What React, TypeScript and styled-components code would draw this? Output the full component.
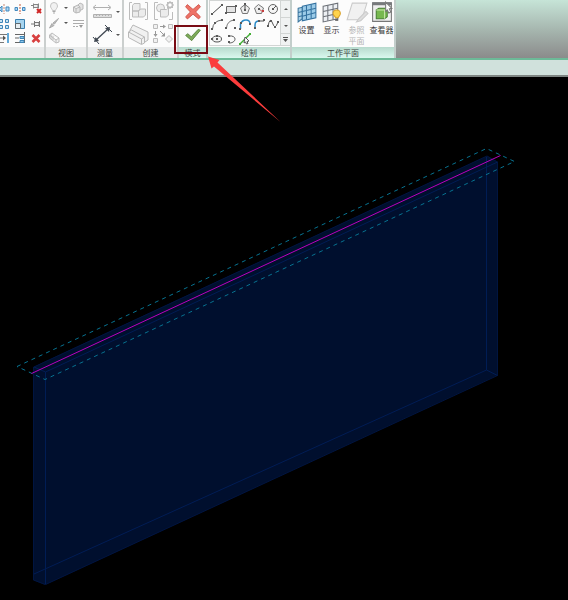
import React from 'react';
import styled, { createGlobalStyle, css } from 'styled-components';

const GlobalStyle = createGlobalStyle`
  *, *::before, *::after { box-sizing: border-box; }
  body {
    margin: 0;
    background: #000;
    font-family: "Noto Sans CJK SC", "Liberation Sans", sans-serif;
    font-size: 8px;
    overflow-x: hidden;
  }
`;

const Page = styled.div`
  position: relative;
  overflow: hidden;
`;

const Ribbon = styled.header`
  display: flex;
  height: 60px;
  background: linear-gradient(#c6e4d7, #a4b3ac 55%, #8b8b8b);
  border-bottom: 2px solid #6dba98;
`;

const OptionsBar = styled.div`
  height: 17px;
  background: #d0e1dc;
  border-bottom: 2px solid #7d8582;
`;

const Panel = styled.section<{ $width: number; $active?: boolean }>`
  position: relative;
  display: flex;
  flex-direction: column;
  flex: none;
  width: ${p => p.$width}px;
  background: #fcfcfc;
  border-right: 2px solid ${p => (p.$active ? '#c3cecb' : '#cbcfce')};
`;

const PanelBody = styled.div`
  display: flex;
  flex: 1;
  min-height: 0;
  overflow: hidden;
`;

const PanelTitle = styled.h2<{ $active?: boolean }>`
  margin: 0;
  height: 11px;
  font-size: 8px;
  font-weight: 400;
  line-height: 11px;
  text-align: center;
  color: #3c4442;
  background: ${p => (p.$active ? 'linear-gradient(#b7dacd, #d9f8ee)' : '#e9ebeb')};
`;

const IconGrid = styled.div<{ $cols: string; $row: number; $end?: boolean }>`
  display: grid;
  flex: 1;
  min-width: 0;
  grid-template-columns: ${p => p.$cols};
  grid-auto-rows: ${p => p.$row}px;
  justify-content: ${p => (p.$end ? 'end' : 'center')};
  align-content: start;
`;

const buttonReset = css`
  padding: 0;
  border: 0;
  background: none;
  font: inherit;
  color: inherit;
`;

const ToolButton = styled.button`
  ${buttonReset}
  display: flex;
  align-items: center;
  justify-content: center;
  min-width: 0;
  svg { flex: none; display: block; }
`;

const Gallery = styled.div`
  display: flex;
  flex: 1;
  margin: 0 0 1px 1px;
  border: 1px solid #d2d5d4;
  border-width: 1px 0 1px 1px;
`;

const ScrollColumn = styled.div`
  display: grid;
  width: 10px;
  grid-template-rows: 16px 15px 1fr;
  background: #d2d5d4;
  gap: 1px;
  padding-left: 1px;
  ${ToolButton} { background: #f0f2f2; }
`;

const LargeTools = styled.div`
  display: grid;
  flex: 1;
  grid-template-columns: repeat(4, 25px);
  justify-content: end;
`;

const LargeButton = styled.button`
  ${buttonReset}
  display: flex;
  flex-direction: column;
  align-items: center;
  justify-content: flex-start;
  color: #3a3a3a;
  line-height: 11px;
  white-space: nowrap;
  svg { flex: none; display: block; }
  &:disabled { color: #b4b4b4; }
`;

const Highlight = styled.div`
  position: absolute;
  left: -5px;
  top: 25px;
  width: 34px;
  height: 29px;
  border: 2px solid #790b14;
  z-index: 1;
`;

const Pointer = styled.svg`
  position: absolute;
  left: 200px;
  top: 50px;
  pointer-events: none;
  z-index: 2;
`;

const Viewport = styled.main`
  background: #000;
  svg { display: block; width: 100%; height: auto; }
`;

type Name =
  | 'alignLeft' | 'mirror' | 'unpin' | 'array' | 'scale' | 'pin' | 'offset' | 'trim' | 'remove'
  | 'bulb' | 'cubes' | 'brush' | 'lines' | 'box'
  | 'ruler' | 'dimension' | 'group' | 'similar' | 'parts' | 'assembly'
  | 'cancel' | 'finish'
  | 'line' | 'rect' | 'polygon' | 'polygonOut' | 'circle' | 'arc' | 'arcCenter' | 'tangent'
  | 'fillet' | 'spline' | 'ellipse' | 'halfEllipse' | 'pick'
  | 'set' | 'show' | 'refPlane' | 'viewer'
  | 'down' | 'up' | 'more';

const dark = '#5a5a5a';
const dot = (x: number, y: number, c = dark) => <rect x={x - 1} y={y - 1} width="2" height="2" fill={c} />;

const art: Record<Name, React.ReactNode> = {
  alignLeft: (
    <g>
      <path d="M2 8l3-3v6zM12 6v4H9V6z" fill="#a9d4f2" stroke="#4289be" />
      <path d="M7 3v10" stroke="#c98a74" strokeDasharray="2 1" />
    </g>
  ),
  mirror: (
    <g>
      <path d="M2 6.500h2.500v3H2zM12 6.500H9.500v3H12z" fill="#a9d4f2" stroke="#4289be" />
      <path d="M7 3v10" stroke="#c35a3b" strokeDasharray="2 1" />
    </g>
  ),
  unpin: (
    <g>
      <path d="M2 4.500h2M4.500 2.500v5M5 3.500h4v3H5M9.500 2.500v5" stroke="#858585" fill="#eee" />
      <path d="M8 8l4 4M12 8l-4 4" stroke="#cf2525" strokeWidth="2" />
    </g>
  ),
  array: (
    <g fill="#c6e3f4" stroke="#3f86b8">
      <path d="M2.500 3.500h3v3h-3zM8.500 3.500h3v3h-3zM2.500 9.500h3v3h-3zM8.500 9.500h3v3h-3z" />
    </g>
  ),
  scale: (
    <g>
      <path d="M2.500 3.500h9v9h-9z" fill="#a6d4ef" stroke="#3a7fae" />
      <path d="M2.500 7.500h5v5h-5z" fill="#e7eef2" stroke="#60686c" />
    </g>
  ),
  pin: <path d="M2 8h3M5.500 5v6M6 6.500h4v3H6M10.500 5v6" stroke="#787878" fill="#eee" />,
  offset: (
    <g>
      <path d="M1 3.500h11M2 7h5M1 11.500h6" stroke="#777" />
      <path d="M6 4.500 9 7 6 9.500z" fill="#555" />
      <path d="M10 2h2v10h-2z" fill="#62a9d8" />
    </g>
  ),
  trim: (
    <g>
      <path d="M2 3.500h9M2 7h4M2 11.500h5M11.500 1v11" stroke="#666" />
      <path d="M7 5.500h4v2H7zM7 9.500h4v2H7z" fill="#8fc7ea" stroke="#3f86b8" />
    </g>
  ),
  remove: <path d="M3.500 4 10.500 11M10.500 4 3.500 11" stroke="#d84040" strokeWidth="2.600" fill="none" />,
  bulb: (
    <g fill="#f1f1f1" stroke="#c4c4c4">
      <path d="M5.500 9.500C5 7.500 3.500 7 3.500 5a3.500 3.500 0 0 1 7 0c0 2-1.500 2.500-2 4.500z" />
      <path d="M5.500 10.500h3M6 12h2" stroke="#aaa" />
    </g>
  ),
  cubes: (
    <g fill="#e3e3e3" stroke="#b8b8b8">
      <path d="M2.500 6 7 4l2 2v5l-4 1-2.500-1.500zM2.500 6 5 7.500 9 6M5 7.500V12M7 4l2-2 3 1.500V8L9 9.500" />
    </g>
  ),
  brush: (
    <g fill="#bbb" stroke="#ababab">
      <path d="M11.500 2.500 7.500 8 6 7z" />
      <path d="M5 7.500 7 9.500 2.500 12z" />
    </g>
  ),
  lines: (
    <g stroke="#acacac" fill="none">
      <path d="M2 4.500h11M2 7.500h11" /><path d="M2 10.500h6" strokeDasharray="2 1" /><path d="M8 9h4l-2 3z" fill="#999" stroke="none" />
    </g>
  ),
  box: (
    <g fill="#f1f1f1" stroke="#bdbdbd">
      <path d="M2.500 4 5 2l7 5v4l-3 1-6.500-5zM2.500 4 9 9l3-2M9 9v3M4 3v5M6 5v4" />
    </g>
  ),
  ruler: (
    <g stroke="#b0b0b0" fill="#ddd">
      <path d="M3 7.500h16M5 5 2 7.500 5 10M17 5l3 2.500-3 2.500" fill="none" />
      <path d="M2.500 14.500h18v3h-18z" />
      <path d="M5.500 14v2M8.500 14v2M11.500 14v2M14.500 14v2M17.500 14v2" />
    </g>
  ),
  dimension: (
    <g stroke="#404852" fill="none">
      <path d="M4 18 18 5" strokeWidth="1.300" />
      <path d="m2 14 6 7M14 2l7 7" />
      <path d="m3 19 1.500-5 3.500 4zM19 4l-5 1 4 4z" fill="#404852" stroke="none" />
    </g>
  ),
  group: (
    <g stroke="#bcbcbc" fill="#ececec">
      <path d="M5 2.500H2.500v17H5M18 2.500h2.500v17H18" fill="none" />
      <path d="M5.500 5.500 7 3.500h6v6l-2 1.500H5.500zM5.500 11h6v6h-6zM11.500 11l2-2h5v6l-2 2h-5z" />
    </g>
  ),
  similar: (
    <g stroke="#bcbcbc" fill="#ececec">
      <path d="M6 2.500H2.500v17H6M17 19.500h3.500V12" fill="none" />
      <circle cx="8.500" cy="8" r="4" />
      <path d="M8.500 9.500h6l2-1.500v7l-2 2h-6z" />
      <circle cx="18" cy="5" r="2.500" fill="#fff" strokeWidth="1.500" />
      <path d="M18 1v1M18 8v1M14 5h1M21 5h1M15 2l1 1M21 8l-1-1M21 2l-1 1M15 8l1-1" />
    </g>
  ),
  parts: (
    <g fill="#f1f1f1" stroke="#b8b8b8">
      <path d="m3 7 3-5 15 7v8l-3 2L3 11z" />
      <path d="m1.500 9 3-2 13 7v6l-3 1.500-13-7zM14.500 21v-5l3-2M1.500 9l13 7" />
    </g>
  ),
  assembly: (
    <g fill="#f1f1f1" stroke="#bcbcbc">
      <path d="M1.500 1.500h4v4h-4zM16.500 1.500h4v4h-4zM1.500 15.500h4v4h-4zM17 12.500l3.500 3.500-3.500 3.500-3.500-3.500z" />
      <path d="M8 3.500h4M3.500 8v3M8 8l4 4" stroke="#999" fill="none" />
      <path d="m11 1.500 3 2-3 2zM1.500 11h4l-2 3zM13 9.500v4H9z" fill="#999" stroke="none" />
    </g>
  ),
  cancel: (
    <path d="m5 3 6.500 5.500L18 3l2 2.500-5.500 6L20 17l-2 2.500-6.500-5.500L5 19.500 3 17l5.500-5.500L3 5.500z" fill="#ee7266" stroke="#cc5047" />
  ),
  finish: (
    <path d="m3 12 2.500-2 4 3.500L17.500 5l2.500 1L10 18z" fill="#7eaa58" stroke="#56833d" />
  ),
  line: <g><path d="M2 12 12 3" stroke="#444" />{dot(2, 12)}{dot(12, 3)}</g>,
  rect: <g><path d="M2.500 4.500h9v6h-9z" fill="#e4e4e4" stroke="#666" />{dot(12, 4)}{dot(2, 11)}</g>,
  polygon: <g><path d="M7 2.500 11.500 6l-2 5.500h-5L2.500 6z" fill="#eee" stroke="#777" /><path d="M7 2v6" stroke="#444" />{dot(7, 8)}{dot(7, 2)}</g>,
  polygonOut: <g><path d="M6.500 2.500 11.500 6l-2 5.500h-5L2.500 6z" fill="#eee" stroke="#777" /><path d="m7 7 4 3" stroke="#c55" />{dot(7, 7)}{dot(11, 9, '#c43d3d')}</g>,
  circle: <g><circle cx="7" cy="7" r="4.500" fill="#f5f5f5" stroke="#666" /><path d="m7 7 3-3" stroke="#555" />{dot(7, 7)}</g>,
  arc: <g><path d="M2.500 12Q3 4 12 3" fill="none" stroke="#666" />{dot(2, 12)}{dot(5, 6)}{dot(12, 3)}</g>,
  arcCenter: <g><path d="M2.500 11Q3 4 10 3" fill="none" stroke="#777" />{dot(2, 11)}{dot(10, 3)}{dot(11, 11)}</g>,
  tangent: <g><path d="M2.500 12V7Q4 3 8 3t4 4" fill="none" stroke="#2789c7" strokeWidth="1.500" />{dot(2, 12)}{dot(3, 6)}{dot(12, 7)}</g>,
  fillet: <g><path d="M3 12V8q0-4 4-4" fill="none" stroke="#2789c7" strokeWidth="1.500" /><path d="M7 4h5" stroke="#555" />{dot(3, 11)}{dot(7, 4)}{dot(12, 3)}</g>,
  spline: <g><path d="M2 9q2-9 4-4t3 5 3-5" fill="none" stroke="#555" />{dot(2, 9)}{dot(5, 4)}{dot(9, 10)}{dot(12, 5)}</g>,
  ellipse: <g><ellipse cx="7" cy="7" rx="4.500" ry="3" fill="#f5f5f5" stroke="#555" />{dot(7, 7)}{dot(2, 7)}{dot(7, 4)}</g>,
  halfEllipse: <g><path d="M5 4c8-1 8 7 0 7" fill="none" stroke="#555" />{dot(5, 4)}{dot(5, 10)}</g>,
  pick: <g><path d="M2 12 12 2" stroke="#42ae34" strokeWidth="1.500" /><path d="m7 5 4 4-2 .5 1 2-1.500.5-1-2L6 11z" fill="#fff" stroke="#555" />{dot(2, 12, '#42ae34')}{dot(12, 2, '#42ae34')}</g>,
  set: (
    <g>
      <path d="m3 8 4-1v11l-4 3z" fill="#abd2e8" stroke="#3a759d" />
      <path d="m7 6 13-3v14L7 20z" fill="#9bcbe8" stroke="#3472a0" />
      <path d="M11 5v14M15.500 4v14M7 11l13-3M7 15.500 20 12M3 12l4-1M3 16l4-1" stroke="#3472a0" fill="none" />
    </g>
  ),
  show: (
    <g>
      <path d="m3 6 14-3v15L3 21z" fill="#edf0f4" stroke="#6c7077" />
      <path d="M7.500 5v15M12.500 4v15M3 11l14-3M3 16l14-3" stroke="#6c7077" fill="none" />
      <path d="M15 17c0-1-2.500-2-2.500-4a3.500 3.500 0 0 1 7 0c0 2-2 3-2 4z" fill="#ffd34c" stroke="#d8a02b" />
      <path d="M14.500 18h3v2h-3z" fill="#666" />
    </g>
  ),
  refPlane: (
    <g fill="#f1f1f1" stroke="#cacaca">
      <path d="M7 3h14l-5 16H2z" />
      <path d="m20 11 2 2-7 7-4 1 2-3z" fill="#ddd" />
    </g>
  ),
  viewer: (
    <g>
      <path d="M2.500 3.500h18v17h-18z" fill="#eee" stroke="#777" />
      <path d="M2 2h19v3H2z" fill="#77797c" />
      <path d="M6 9.500 8.500 8h8v8L14 18H6z" fill="#77b84e" stroke="#477f32" />
      <path d="M6 9.500h8V18M14 9.500 16.500 8" stroke="#c9e7ad" fill="none" />
      <path d="m15 2 6 6-2.500.5 1.500 3-2 1-1.500-3L15 11z" fill="#fff" stroke="#777" />
    </g>
  ),
  down: <path d="M0 1h4L2 3z" fill="#555" />,
  up: <path d="M0 3h4L2 1z" fill="#555" />,
  more: <path d="M0 0h5v1H0zM0 2h5L2.500 5z" fill="#555" />,
};

const Icon = ({ name, size = 14 }: { name: Name; size?: number }) => {
  const box = name === 'down' || name === 'up' ? 4 : name === 'more' ? 5 : size > 14 ? 23 : 14;
  const px = box < 6 ? box : size;
  return (
    <svg width={px} height={px} viewBox={`0 0 ${box} ${box}`} fill="none" aria-hidden="true">
      {art[name]}
    </svg>
  );
};

const Tool = ({ name, size, label }: { name: Name; size?: number; label: string }) => (
  <ToolButton type="button" aria-label={label}><Icon name={name} size={size} /></ToolButton>
);

const modifyTools: [Name, string][] = [
  ['alignLeft', '对齐'], ['mirror', '镜像'], ['unpin', '解锁'],
  ['array', '阵列'], ['scale', '缩放'], ['pin', '锁定'],
  ['offset', '修剪'], ['trim', '延伸'], ['remove', '删除'],
];

const drawTools: [Name, string][] = [
  ['line', '直线'], ['rect', '矩形'], ['polygon', '内接多边形'], ['polygonOut', '外接多边形'], ['circle', '圆形'],
  ['arc', '起点终点半径弧'], ['arcCenter', '圆心端点弧'], ['tangent', '相切端点弧'], ['fillet', '圆角弧'], ['spline', '样条曲线'],
  ['ellipse', '椭圆'], ['halfEllipse', '半椭圆'], ['pick', '拾取线'],
];

const Wall = () => (
  <svg viewBox="0 77 568 523" role="img" aria-label="墙体三维视图">
    <path d="M33 367 487 156 498 162V375L45 585 33 580Z" fill="#000f2e" />
    <g fill="none" stroke="#001d55">
      <path d="M33.500 367V580L45.500 584.500 497.500 375.500V162" stroke="#001541" />
      <path d="M34 367 45.500 372 497.500 162M45.500 372V584M34 574 486.500 370 497.500 375.500M486.500 157V370" />
      <path d="M34 367 487 156 497.500 162" stroke="#001541" />
    </g>
    <path d="M17 366.500 486.500 148.500 514.500 161.500 45 379.500Z" fill="none" stroke="#077290" strokeDasharray="4 4" />
    <path d="M31.500 373.500 500.500 155.500" stroke="#b900bd" />
  </svg>
);

export default function App() {
  return (
    <Page>
      <GlobalStyle />
      <Ribbon>
        <Panel $width={46}>
          <PanelBody>
            <IconGrid $cols="repeat(3, 16px)" $row={15} $end>
              {modifyTools.map(([n, l]) => <Tool key={n} name={n} label={l} />)}
            </IconGrid>
          </PanelBody>
          <PanelTitle />
        </Panel>
        <Panel $width={42}>
          <PanelBody>
            <IconGrid $cols="16px 8px 16px" $row={15}>
              <Tool name="bulb" label="隐藏" /><Tool name="down" label="隐藏选项" /><Tool name="cubes" label="置换图元" />
              <Tool name="brush" label="替换图形" /><Tool name="down" label="替换选项" /><Tool name="lines" label="线处理" />
              <Tool name="box" label="选择框" />
            </IconGrid>
          </PanelBody>
          <PanelTitle>视图</PanelTitle>
        </Panel>
        <Panel $width={36}>
          <PanelBody>
            <IconGrid $cols="26px 6px" $row={23}>
              <Tool name="ruler" size={23} label="测量" /><Tool name="down" label="测量选项" />
              <Tool name="dimension" size={23} label="尺寸标注" /><Tool name="down" label="标注选项" />
            </IconGrid>
          </PanelBody>
          <PanelTitle>测量</PanelTitle>
        </Panel>
        <Panel $width={55}>
          <PanelBody>
            <IconGrid $cols="26px 24px" $row={23}>
              <Tool name="group" size={23} label="创建组" /><Tool name="similar" size={23} label="创建类似" />
              <Tool name="parts" size={23} label="创建零件" /><Tool name="assembly" size={23} label="创建部件" />
            </IconGrid>
          </PanelBody>
          <PanelTitle>创建</PanelTitle>
        </Panel>
        <Panel $width={29} $active>
          <PanelBody>
            <IconGrid $cols="23px" $row={23}>
              <Tool name="cancel" size={20} label="取消" /><Tool name="finish" size={20} label="完成" />
            </IconGrid>
          </PanelBody>
          <PanelTitle $active>模式</PanelTitle>
          <Highlight />
        </Panel>
        <Panel $width={84} $active>
          <PanelBody>
            <Gallery>
              <IconGrid $cols="repeat(5, 14px)" $row={15}>
                {drawTools.map(([n, l]) => <Tool key={n} name={n} label={l} />)}
              </IconGrid>
              <ScrollColumn>
                <Tool name="up" label="向上" /><Tool name="down" label="向下" /><Tool name="more" label="更多" />
              </ScrollColumn>
            </Gallery>
          </PanelBody>
          <PanelTitle $active>绘制</PanelTitle>
        </Panel>
        <Panel $width={104} $active>
          <PanelBody>
            <LargeTools>
              <LargeButton type="button"><Icon name="set" size={24} />设置</LargeButton>
              <LargeButton type="button"><Icon name="show" size={24} />显示</LargeButton>
              <LargeButton type="button" disabled><Icon name="refPlane" size={24} />参照<br />平面</LargeButton>
              <LargeButton type="button"><Icon name="viewer" size={24} />查看器</LargeButton>
            </LargeTools>
          </PanelBody>
          <PanelTitle $active>工作平面</PanelTitle>
        </Panel>
      </Ribbon>
      <OptionsBar />
      <Viewport><Wall /></Viewport>
      <Pointer width="84" height="76" viewBox="200 50 84 76" aria-hidden="true">
        <path d="M208 56.500 219.500 60 217.500 62.500 280.500 122 214 66.500 211.500 68.500Z" fill="#fb3c3c" />
      </Pointer>
    </Page>
  );
}
